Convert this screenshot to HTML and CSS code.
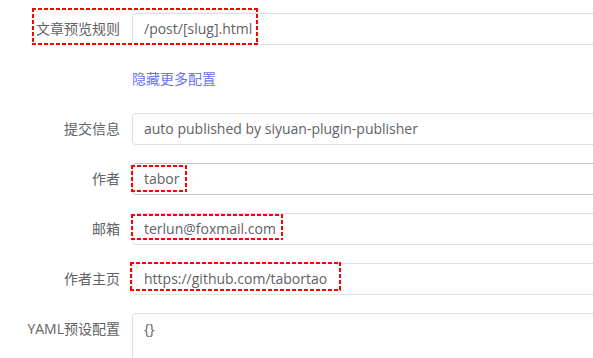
FILE: index.html
```html
<!DOCTYPE html>
<html>
<head>
    <title>发布设置</title>
    <link rel="stylesheet" href="styles.css">
</head>
<body>
    <div class="form">
        <div class="form-item">
            <label class="form-label">文章预览规则</label>
            <div class="input">/post/[slug].html</div>
            <span class="mark mark-preview"></span>
        </div>
        <div class="form-item">
            <label class="form-label"></label>
            <a class="toggle-link" href="#">隐藏更多配置</a>
        </div>
        <div class="form-item">
            <label class="form-label">提交信息</label>
            <div class="input">auto published by siyuan-plugin-publisher</div>
        </div>
        <div class="form-item">
            <label class="form-label">作者</label>
            <div class="input input-hover">tabor</div>
            <span class="mark mark-author"></span>
        </div>
        <div class="form-item">
            <label class="form-label">邮箱</label>
            <div class="input">terlun@foxmail.com</div>
            <span class="mark mark-email"></span>
        </div>
        <div class="form-item">
            <label class="form-label">作者主页</label>
            <div class="input">https://github.com/tabortao</div>
            <span class="mark mark-home"></span>
        </div>
        <div class="form-item">
            <label class="form-label label-top">YAML预设配置</label>
            <div class="textarea">{}</div>
        </div>
    </div>
</body>
</html>
```

FILE: styles.css
```css
body {
    margin: 0;
    background: #fff;
    font-family: 'Open Sans', 'Noto Sans CJK SC', sans-serif;
    overflow: hidden;
}
.form {
    width: 680px;
    padding-top: 13px;
}
.form-item {
    position: relative;
    display: flex;
    align-items: flex-start;
    margin-bottom: 18px;
}
.form-label {
    flex: 0 0 132px;
    box-sizing: border-box;
    padding-right: 12px;
    height: 32px;
    line-height: 32px;
    text-align: right;
    font-size: 14px;
    color: #606266;
}
.input {
    flex: 1;
    height: 32px;
    box-sizing: border-box;
    border: 1px solid #dcdfe6;
    border-radius: 4px;
    padding: 0 11px;
    line-height: 30px;
    font-size: 14px;
    color: #606266;
    white-space: nowrap;
}
.input-hover {
    border-color: #c0c4cc;
}
.textarea {
    flex: 1;
    height: 90px;
    box-sizing: border-box;
    border: 1px solid #dcdfe6;
    border-radius: 4px;
    padding: 4px 11px;
    line-height: 22px;
    font-size: 14px;
    color: #606266;
}
.toggle-link {
    height: 32px;
    line-height: 32px;
    font-size: 14px;
    color: #6b74f2;
    text-decoration: none;
}
/* red dashed annotation boxes, short dashes like a screenshot tool */
.mark {
    position: absolute;
    background:
        repeating-linear-gradient(90deg, #f00 0 4px, transparent 4px 6px) top left / 100% 2px no-repeat,
        repeating-linear-gradient(90deg, #f00 0 4px, transparent 4px 6px) bottom left / 100% 2px no-repeat,
        repeating-linear-gradient(180deg, #f00 0 4px, transparent 4px 6px) top left / 2px 100% no-repeat,
        repeating-linear-gradient(180deg, #f00 0 4px, transparent 4px 6px) top right / 2px 100% no-repeat;
}
.mark-preview {
    top: -5px;
    left: 32px;
    width: 226px;
    height: 37px;
}
.mark-author {
    top: 2px;
    left: 131px;
    width: 56px;
    height: 27px;
}
.mark-email {
    top: 1px;
    left: 131px;
    width: 152px;
    height: 26px;
}
.mark-home {
    top: -1px;
    left: 130px;
    width: 211px;
    height: 29px;
}
```
